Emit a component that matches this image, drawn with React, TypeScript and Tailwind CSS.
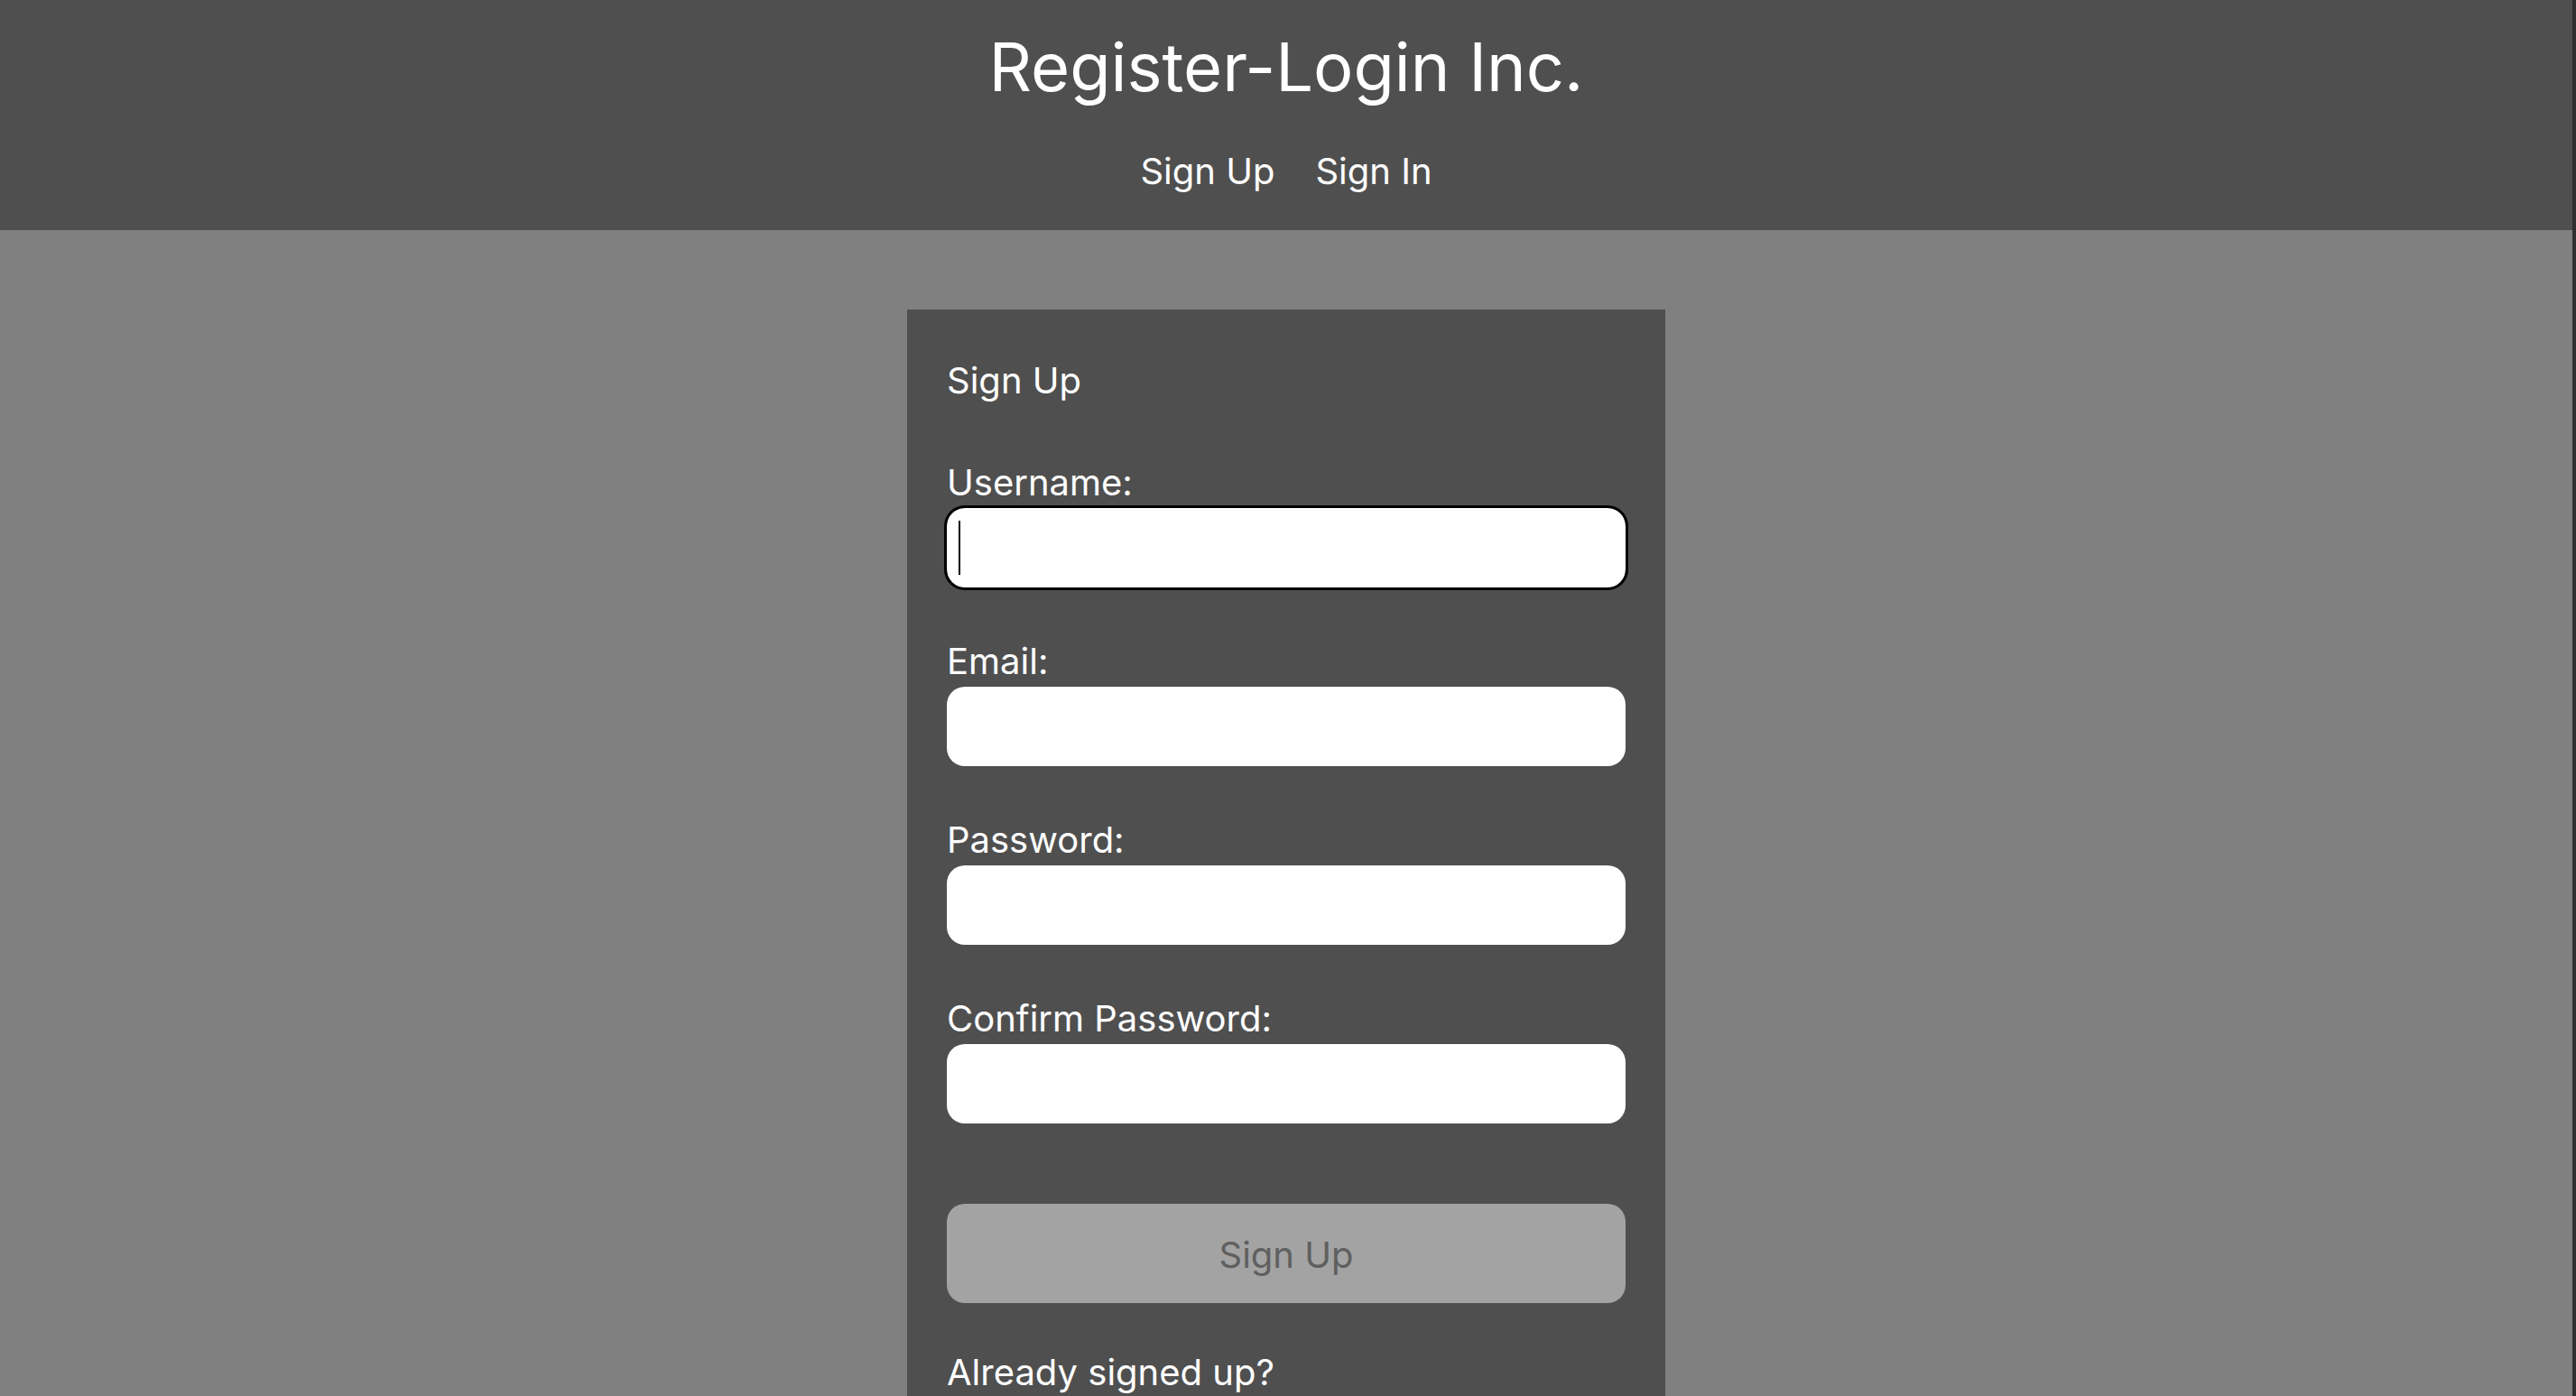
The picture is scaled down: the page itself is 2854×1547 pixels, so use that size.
import { useState } from "react";

const Field = ({
  label,
  type = "text",
  focused = false,
  first = false,
}: {
  label: string;
  type?: string;
  focused?: boolean;
  first?: boolean;
}) => (
  <div className={first ? "mt-[65px]" : "mt-[58px]"}>
    <label className="block text-[40px] leading-[48px] text-white mb-[4px]">
      {label}
    </label>
    <div className="relative">
      <input
        type={type}
        className={`block w-full h-[88px] rounded-[20px] bg-white px-[13px] text-[40px] text-black ${
          focused ? "outline-3 outline-black" : "outline-none"
        }`}
      />
      {focused && (
        <span className="absolute left-[13px] top-[14px] h-[60px] w-[2px] bg-black" />
      )}
    </div>
  </div>
);

const App = () => {
  const [page, setPage] = useState("signup");

  return (
    <div className="flex h-screen overflow-hidden bg-[#808080] font-['Inter','Noto_Sans',sans-serif]">
      <div className="flex-1 min-w-0">
        <header className="bg-[#4f4f4f] text-white pt-[29px] pb-[41px] text-center">
          <h1 className="text-[74px] leading-[91px]">Register-Login Inc.</h1>
          <nav className="mt-[46px]">
            <ul className="flex justify-center gap-[45px] text-[40px] leading-[48px]">
              <li>
                <button onClick={() => setPage("signup")}>Sign Up</button>
              </li>
              <li>
                <button onClick={() => setPage("signin")}>Sign In</button>
              </li>
            </ul>
          </nav>
        </header>

        <main className="flex justify-center pt-[88px] pb-[88px]">
          <form
            className="w-[840px] bg-[#4f4f4f] px-[44px] pt-[55px] pb-[52px]"
            onSubmit={(e) => e.preventDefault()}>
            <h2 className="text-[40px] leading-[48px] text-white">
              {page === "signup" ? "Sign Up" : "Sign In"}
            </h2>

            <Field label="Username:" focused first />
            <Field label="Email:" type="email" />
            <Field label="Password:" type="password" />
            <Field label="Confirm Password:" type="password" />

            <button
              type="submit"
              disabled
              className="mt-[89px] block w-full h-[110px] rounded-[20px] bg-[#a3a3a3] pt-[4px] text-[40px] text-[#5f5f5f]">
              Sign Up
            </button>

            <p className="mt-[53px] text-[40px] leading-[48px] text-white">
              Already signed up?
            </p>
            <button
              type="button"
              onClick={() => setPage("signin")}
              className="mt-[8px] text-[40px] leading-[48px] text-white underline">
              Sign In
            </button>
          </form>
        </main>
      </div>
      {/* scrollbar track */}
      <div className="w-[4px] shrink-0 bg-[#2f2f2f]" />
    </div>
  );
};

export default App;
